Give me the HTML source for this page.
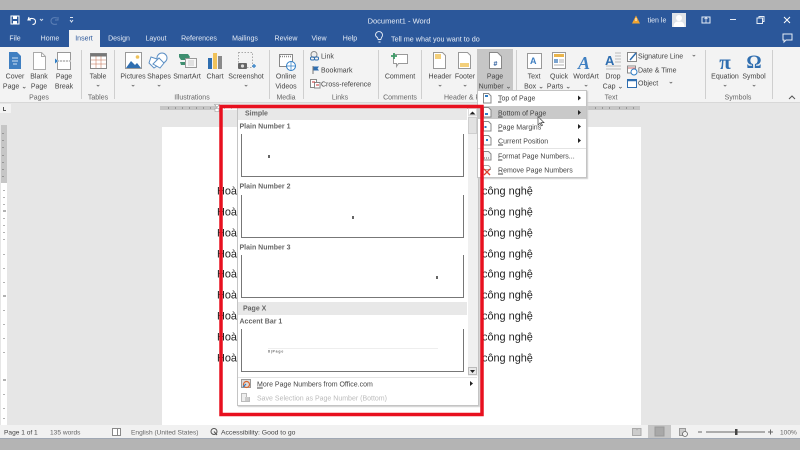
<!DOCTYPE html>
<html lang="vi">
<head>
<meta charset="utf-8">
<title>Document1 - Word</title>
<style>
html,body{margin:0;padding:0;width:800px;height:450px;overflow:hidden;background:#b4b4b4}
body{position:relative;font-family:"Liberation Sans","Noto Sans CJK SC",sans-serif;font-size:7px;color:#444;filter:blur(.3px)}
.r{position:absolute}
.t{position:absolute;white-space:nowrap;line-height:10px;transform:translateY(-3.5px)}
.c{position:absolute;white-space:nowrap;line-height:10px;transform:translate(-50%,-3.5px)}
.w{color:#e6ecf5}
.sep{position:absolute;top:50px;width:1px;height:49px;background:#cfcfcf}
.g{color:#666}
.doc{font-size:10.9px;color:#222}
.b{font-weight:bold;color:#666}
svg{position:absolute;left:0;top:0}
</style>
</head>
<body>
<div class="r" style="left:0;top:10px;width:800px;height:37px;background:#2b579a"></div>
<div class="r" style="left:0;top:47px;width:800px;height:55px;background:#f3f3f3"></div>
<div class="r" style="left:0;top:102px;width:800px;height:323px;background:#e6e6e6"></div>
<div class="r" style="left:0;top:102px;width:800px;height:1px;background:#d8d8d8"></div>
<div class="r" style="left:0;top:425px;width:800px;height:13px;background:#f1f1f1"></div>
<div class="r" style="left:0;top:438px;width:800px;height:1px;background:#a0a8b4"></div>
<div class="r" style="left:69px;top:30px;width:31px;height:17px;background:#f3f3f3"></div>

<div class="r" style="left:162px;top:127px;width:479px;height:298px;background:#fff"></div>

<!-- rulers -->
<div class="r" style="left:160px;top:106px;width:57px;height:4px;background:#c6c6c6"></div>
<div class="r" style="left:217px;top:106px;width:30px;height:4px;background:#fff"></div>
<div class="r" style="left:587px;top:106px;width:53px;height:4px;background:#c6c6c6"></div>
<div class="r" style="left:1px;top:125px;width:6px;height:58px;background:#c6c6c6"></div>
<div class="r" style="left:1px;top:183px;width:6px;height:242px;background:#fff"></div>
<div class="r" style="left:0;top:104px;width:11px;height:9px;background:#f3f3f3"></div>
<div class="r" style="left:3px;top:107px;width:1px;height:3px;background:#555"></div>
<div class="r" style="left:3px;top:110px;width:3px;height:1px;background:#555"></div>

<!-- groups -->
<div class="sep" style="left:81px"></div>
<div class="sep" style="left:114px"></div>
<div class="sep" style="left:269px"></div>
<div class="sep" style="left:303px"></div>
<div class="sep" style="left:378px"></div>
<div class="sep" style="left:421px"></div>
<div class="sep" style="left:516px"></div>
<div class="sep" style="left:705px"></div>
<div class="sep" style="left:772px"></div>
<div class="r" style="left:477px;top:49px;width:36px;height:42px;background:#c6c6c6"></div>

<!-- document text -->
<span class="t doc" style="left:217px;top:189.500px">Hoà</span><span class="t doc" style="left:482px;top:189.500px">công nghệ</span>
<span class="t doc" style="left:217px;top:210.500px">Hoà</span><span class="t doc" style="left:482px;top:210.500px">công nghệ</span>
<span class="t doc" style="left:217px;top:231.500px">Hoà</span><span class="t doc" style="left:482px;top:231.500px">công nghệ</span>
<span class="t doc" style="left:217px;top:252.500px">Hoà</span><span class="t doc" style="left:482px;top:252.500px">công nghệ</span>
<span class="t doc" style="left:217px;top:273px">Hoà</span><span class="t doc" style="left:482px;top:273px">công nghệ</span>
<span class="t doc" style="left:217px;top:294px">Hoà</span><span class="t doc" style="left:482px;top:294px">công nghệ</span>
<span class="t doc" style="left:217px;top:315px">Hoà</span><span class="t doc" style="left:482px;top:315px">công nghệ</span>
<span class="t doc" style="left:217px;top:336px">Hoà</span><span class="t doc" style="left:482px;top:336px">công nghệ</span>
<span class="t doc" style="left:217px;top:357px">Hoà</span><span class="t doc" style="left:482px;top:357px">công nghệ</span>

<!-- title bar text -->
<span class="c w" style="left:399px;top:20px;font-size:7.500px">Document1 - Word</span>
<span class="c w" style="left:657px;top:20px">tien le</span>
<span class="c w" style="left:15px;top:38px">File</span>
<span class="c w" style="left:50px;top:38px">Home</span>
<span class="c" style="left:84px;top:38px;color:#2b579a">Insert</span>
<span class="c w" style="left:119px;top:38px">Design</span>
<span class="c w" style="left:156px;top:38px">Layout</span>
<span class="c w" style="left:199px;top:38px">References</span>
<span class="c w" style="left:245px;top:38px">Mailings</span>
<span class="c w" style="left:286px;top:38px">Review</span>
<span class="c w" style="left:319px;top:38px">View</span>
<span class="c w" style="left:350px;top:38px">Help</span>
<span class="t w" style="left:391px;top:38px;font-size:7.200px">Tell me what you want to do</span>

<!-- ribbon labels -->
<span class="c" style="left:15px;top:76px">Cover</span><span class="c" style="left:15px;top:85.500px">Page ⌄</span>
<span class="c" style="left:39px;top:76px">Blank</span><span class="c" style="left:39px;top:85.500px">Page</span>
<span class="c" style="left:64px;top:76px">Page</span><span class="c" style="left:64px;top:85.500px">Break</span>
<span class="c g" style="left:39px;top:97px">Pages</span>
<span class="c" style="left:98px;top:76px">Table</span><span class="c" style="left:98px;top:84px">⌄</span>
<span class="c g" style="left:98px;top:97px">Tables</span>
<span class="c" style="left:133px;top:76px">Pictures</span><span class="c" style="left:133px;top:84px">⌄</span>
<span class="c" style="left:159px;top:76px">Shapes</span><span class="c" style="left:159px;top:84px">⌄</span>
<span class="c" style="left:187px;top:76px">SmartArt</span>
<span class="c" style="left:215px;top:76px">Chart</span>
<span class="c" style="left:246px;top:76px">Screenshot</span><span class="c" style="left:246px;top:84px">⌄</span>
<span class="c g" style="left:192px;top:97px">Illustrations</span>
<span class="c" style="left:286px;top:76px">Online</span><span class="c" style="left:286px;top:85.500px">Videos</span>
<span class="c g" style="left:286px;top:97px">Media</span>
<span class="t" style="left:321px;top:56px">Link</span>
<span class="t" style="left:321px;top:70px">Bookmark</span>
<span class="t" style="left:321px;top:83.500px">Cross-reference</span>
<span class="c g" style="left:340px;top:97px">Links</span>
<span class="c" style="left:400px;top:76px">Comment</span>
<span class="c g" style="left:400px;top:97px">Comments</span>
<span class="c" style="left:440px;top:76px">Header</span><span class="c" style="left:440px;top:84px">⌄</span>
<span class="c" style="left:465px;top:76px">Footer</span><span class="c" style="left:465px;top:84px">⌄</span>
<span class="t g" style="left:444px;top:97px">Header &amp; F</span>
<span class="c" style="left:495px;top:76px">Page</span><span class="c" style="left:495px;top:85.500px">Number ⌄</span>
<span class="c" style="left:534px;top:76px">Text</span><span class="c" style="left:534px;top:85.500px">Box ⌄</span>
<span class="c" style="left:559px;top:76px">Quick</span><span class="c" style="left:559px;top:85.500px">Parts ⌄</span>
<span class="c" style="left:586px;top:76px">WordArt</span><span class="c" style="left:586px;top:84px">⌄</span>
<span class="c" style="left:613px;top:76px">Drop</span><span class="c" style="left:613px;top:85.500px">Cap ⌄</span>
<span class="t" style="left:638px;top:56px">Signature Line</span><span class="t" style="left:691px;top:54px">⌄</span>
<span class="t" style="left:638px;top:70px">Date &amp; Time</span>
<span class="t" style="left:638px;top:83px">Object</span><span class="t" style="left:668px;top:81px">⌄</span>
<span class="c g" style="left:611px;top:97px">Text</span>
<span class="c" style="left:725px;top:76px">Equation</span><span class="c" style="left:725px;top:84px">⌄</span>
<span class="c" style="left:754px;top:76px">Symbol</span><span class="c" style="left:754px;top:84px">⌄</span>
<span class="c g" style="left:738px;top:97px">Symbols</span>

<!-- status bar -->
<span class="t" style="left:4px;top:432px;font-size:6.600px">Page 1 of 1</span>
<span class="t g" style="left:50px;top:432px;font-size:6.600px">135 words</span>
<span class="t g" style="left:131px;top:432px;font-size:6.600px">English (United States)</span>
<span class="t" style="left:221px;top:432px;font-size:6.800px">Accessibility: Good to go</span>
<span class="t g" style="left:780px;top:432px;font-size:6.600px">100%</span>
<div class="r" style="left:648px;top:425px;width:23px;height:13px;background:#c6c6c6"></div>

<!-- icons -->
<svg width="800" height="450" viewBox="0 0 800 450" fill="none">
  <!-- QAT -->
  <rect x="11" y="16" width="8" height="8" fill="none" stroke="#fff" stroke-width="1"/>
  <rect x="13" y="16" width="4" height="3" fill="#fff"/>
  <rect x="13" y="21" width="4" height="3" fill="#fff"/>
  <path d="M29 17l-1 3h3M28.500 19.500c3-2 7-1 7 2s-2 3-3 3" stroke="#fff" stroke-width="1.100"/>
  <path d="M40 19l1.500 1.500L43 19" stroke="#cdd9ea"/>
  <path d="M58 17v3h-3M57 18c-3-1-6 0-6 3s3 4 6 3" stroke="#5d80b6"/>
  <path d="M70 17.500h3M70 20l1.500 2L73 20" stroke="#dfe7f2"/>
  <!-- title right -->
  <path d="M636 15.500l4 8h-8z" fill="#f2a530"/><rect x="635.500" y="18" width="1" height="3" fill="#fff"/>
  <rect x="672" y="13" width="14" height="14" fill="#dfe3e8"/>
  <circle cx="679" cy="18" r="3" fill="#fff"/><path d="M673.500 27c0-4 2-5.500 5.500-5.500s5.500 1.500 5.500 5.500z" fill="#fff"/>
  <rect x="702" y="17" width="8" height="6" stroke="#e6ecf5"/><path d="M706 17v6M704.500 19l1.500-1.500 1.500 1.500" stroke="#e6ecf5" stroke-width=".8"/>
  <path d="M730 19.500h6" stroke="#e6ecf5"/>
  <rect x="757" y="18" width="5.500" height="5.500" stroke="#e6ecf5"/><path d="M759 18v-1.500h5v5h-1.500" stroke="#e6ecf5"/>
  <path d="M784 17l6 6M790 17l-6 6" stroke="#fff" stroke-width="1"/>
  <path d="M783 34h9v6h-6l-2 2v-2h-1z" stroke="#e6ecf5"/>
  <path d="M375.500 35a3.500 3.500 0 1 1 6 2.500l-.7 2h-2.600l-.7-2a3.500 3.500 0 0 1-2-2.500zM378.500 42h2" stroke="#e6ecf5" stroke-width=".9"/>

  <!-- Cover Page -->
  <path d="M9 52h8l4 4v13H9z" fill="#3f7fc1"/><path d="M12 58h6M12 61h6M13 64h4" stroke="#cfe0f2"/>
  <!-- Blank Page -->
  <path d="M33.500 52.500h8l4 4v13h-12z" fill="#fff" stroke="#aaa"/><path d="M41.500 52.500v4h4" stroke="#aaa"/>
  <!-- Page Break -->
  <path d="M57.500 60v-7.500h13V60M57.500 62v7.500h13V62" fill="#fff" stroke="#999"/>
  <path d="M57 61h14" stroke="#999" stroke-dasharray="2 1"/><path d="M55 58.500l3 2.500-3 2.500z" fill="#2f7ec6"/>
  <!-- Table -->
  <rect x="90.500" y="53.500" width="16" height="15" fill="#fff" stroke="#888"/>
  <rect x="90.500" y="53.500" width="16" height="3" fill="#777"/>
  <path d="M96 56v12M101 56v12M91 60h15M91 64h15" stroke="#c06a4a" stroke-width=".5"/>
  <!-- Pictures -->
  <rect x="125.500" y="52.500" width="16" height="16" fill="#fff" stroke="#999"/>
  <path d="M126 68l5-7 4 4 2-2 4 5z" fill="#2f6eb0"/><circle cx="137.500" cy="57" r="1.800" fill="#f0c25a"/>
  <!-- Shapes -->
  <path d="M151 57l6 2v7l-3 2-5-5z" fill="#fff" stroke="#5c8fc4"/>
  <circle cx="162" cy="58" r="5" fill="#fff" stroke="#5c8fc4"/>
  <path d="M153 64l6-6 5 5-4 5z" fill="#fff" stroke="#5c8fc4"/>
  <!-- SmartArt -->
  <path d="M179 54h9l2 3-2 3h-7l-2-3z" fill="#3f8f70"/><path d="M180 62h8l-2 3h-5z" fill="#3f8f70"/>
  <rect x="185.500" y="58.500" width="11" height="9" fill="#f7f7f7" stroke="#999"/><path d="M188 61h6M188 63h6M188 65h6" stroke="#999" stroke-width=".6"/>
  <!-- Chart -->
  <rect x="208" y="58" width="4" height="11" fill="#2f6eb0"/><rect x="213" y="53" width="4" height="16" fill="#f0c25a"/><rect x="218" y="56" width="4" height="13" fill="#8a8a8a"/>
  <!-- Screenshot -->
  <rect x="238.500" y="52.500" width="14" height="15" stroke="#aaa" stroke-dasharray="1.500 1.500"/>
  <rect x="238" y="63" width="9" height="6" rx="1" fill="#666"/><circle cx="242.500" cy="66" r="1.600" fill="#ddd"/>
  <path d="M252 66h4M254 64v4" stroke="#2f7ec6" stroke-width="1.200"/>
  <!-- Online Videos -->
  <rect x="279.500" y="54.500" width="13" height="12" fill="#fff" stroke="#888"/>
  <path d="M280 56.500h12" stroke="#888" stroke-dasharray="1 1" stroke-width="1.500"/>
  <circle cx="291" cy="66" r="4.500" fill="#fff" stroke="#2f7ec6"/><path d="M286.500 66h9M291 61.500v9" stroke="#2f7ec6" stroke-width=".7"/>
  <!-- Link icons -->
  <circle cx="314" cy="54.500" r="3" fill="#eee" stroke="#888"/>
  <rect x="310.500" y="57" width="4" height="3" rx="1.200" stroke="#2f6eb0"/><rect x="314.500" y="57" width="4" height="3" rx="1.200" stroke="#2f6eb0"/>
  <path d="M313 66v8" stroke="#777"/><path d="M313.500 66.500h5.500l-1.500 2 1.500 2h-5.500z" fill="#2f6eb0"/>
  <rect x="310.500" y="79.500" width="6" height="8" fill="#fff" stroke="#888"/><rect x="314.500" y="82.500" width="5.500" height="5.500" fill="#fff" stroke="#888"/><path d="M312 82h3M316 85h3" stroke="#c33"/>
  <!-- Comment -->
  <path d="M393.500 54.500h14v9h-9l-2 3v-3h-3z" fill="#fff" stroke="#999"/>
  <path d="M391 56h6M394 53v6" stroke="#3f9a68" stroke-width="1.800"/>
  <!-- Header -->
  <path d="M433.500 52.500h9l3 3v13h-12z" fill="#fff" stroke="#999"/><rect x="435" y="54" width="6" height="5" fill="#f3cf7a"/>
  <!-- Footer -->
  <path d="M458.500 52.500h9l3 3v13h-12z" fill="#fff" stroke="#999"/><rect x="460" y="63" width="9" height="4" fill="#f3cf7a"/>
  <!-- Page Number -->
  <path d="M489.500 52.500h8l4 4v12h-12z" fill="#fff" stroke="#888"/>
  <text x="495.500" y="66" text-anchor="middle" font-size="7" font-weight="bold" fill="#2f5f9e" font-family="Liberation Sans">#</text>
  <!-- Text Box -->
  <rect x="527.500" y="53.500" width="14" height="15" fill="#fff" stroke="#999"/>
  <text x="530" y="64" font-size="9" font-weight="bold" fill="#3f7fc1" font-family="Liberation Sans">A</text>
  <!-- Quick Parts -->
  <rect x="552.500" y="52.500" width="13" height="16" fill="#fff" stroke="#999"/><rect x="554" y="54" width="10" height="3" fill="#e9b44c"/><rect x="554" y="59" width="4" height="4" fill="#7aa4d0"/><path d="M559 60h5M559 62h5M554 65h10" stroke="#999" stroke-width=".8"/>
  <!-- WordArt -->
  <text x="578" y="69" font-size="18" font-style="italic" font-weight="bold" fill="#3f7fc1" font-family="Liberation Serif">A</text>
  <!-- Drop cap -->
  <text x="605" y="65" font-size="13" font-weight="bold" fill="#2f6eb0" font-family="Liberation Sans">A</text>
  <path d="M615 53h6M615 56h6M615 59h6M615 62h6M606 66h15M606 69h15" stroke="#bbb"/>
  <!-- Signature/Date/Object -->
  <rect x="627.500" y="52.500" width="9" height="9" fill="#fff" stroke="#888"/><path d="M630 60l6-7" stroke="#2f6eb0" stroke-width="1.500"/>
  <rect x="627.500" y="66" width="8" height="7" fill="#fff" stroke="#888"/><path d="M628 68h7" stroke="#c66"/><circle cx="634" cy="72" r="3" fill="#fff" stroke="#2f7ec6"/>
  <rect x="627.500" y="79.500" width="9" height="8" fill="#fff" stroke="#2f6eb0"/><path d="M628 80.500h8" stroke="#2f6eb0" stroke-width="1.500"/>
  <!-- Equation / Symbol -->
  <text x="725" y="69" text-anchor="middle" font-size="21" font-weight="bold" fill="#2f6eb0" font-family="Liberation Serif">π</text>
  <text x="754" y="68" text-anchor="middle" font-size="19" font-weight="bold" fill="#2f6eb0" font-family="Liberation Serif">Ω</text>
  <path d="M789 99l3-3 3 3" stroke="#555"/>

  <!-- ruler ticks -->
  <path d="M168 108h1M175 108h1M182 108h1M189 108h1M196 108h1M203 108h1M210 108h1M224 108h1M231 108h1M595 108h1M602 108h1M609 108h1M619 108h1M626 108h1M633 108h1" stroke="#666"/>
  <path d="M3 133v1M3 140v1M3 147v1M3 155v1M3 162v1M3 169v1M3 176v1M4 190v1M4 197v1M4 204v1M3 211h3M4 218v1M4 225v1M4 232v1M4 239v1M4 254v1M4 268v1M4 282v1M3 296h3M4 310v1M4 324v1M4 338v1M4 352v1M3 380h3M4 394v1M4 408v1M4 418v1" stroke="#666"/>
  <path d="M214.500 104.500h5l-2.500 3zM215 108.500h4v3h-4z" fill="#fff" stroke="#999" stroke-width=".6"/>

  <!-- status icons -->
  <path d="M112.500 428.500h5v7h-5zM117.500 428.500h3v7h-3z" fill="#fff" stroke="#888"/>
  <circle cx="214" cy="431.500" r="3" stroke="#555"/><path d="M214 431.500l3 3.500" stroke="#555"/>
  <path d="M632.500 428.500h4l.5 1 .5-1h3.500v7h-8.500z" fill="#ccc" stroke="#aaa"/>
  <rect x="655" y="427" width="9" height="9" fill="#a8a8a8" stroke="#999"/>
  <rect x="679.500" y="428.500" width="6" height="7" fill="#ccc" stroke="#999"/><circle cx="685" cy="434" r="2.500" fill="#f1f1f1" stroke="#666" stroke-width=".8"/>
  <path d="M698 432h4M706 432h59M768 432h5M770.500 429.500v5" stroke="#666"/>
  <rect x="735" y="429" width="2.500" height="6" fill="#444"/>
</svg>

<!-- dropdown gallery -->
<div class="r" style="left:237px;top:108px;width:240px;height:296px;background:#fff;border:1px solid #c4c4c4;box-shadow:1px 1px 1px #ccc"></div>
<div class="r" style="left:238px;top:108px;width:229px;height:12px;background:#e8e8e8"></div>
<span class="t b" style="left:245px;top:113px">Simple</span>
<span class="t b" style="left:239.500px;top:126px">Plain Number 1</span>
<div class="r" style="left:241px;top:134px;width:221px;height:42px;border:solid #777;border-width:0 1px 1.500px 1.500px"></div>
<div class="r" style="left:268px;top:155px;width:1.500px;height:3px;background:#666"></div>
<span class="t b" style="left:239.500px;top:186px">Plain Number 2</span>
<div class="r" style="left:241px;top:195px;width:221px;height:42px;border:solid #777;border-width:0 1px 1.500px 1.500px"></div>
<div class="r" style="left:352px;top:216px;width:1.500px;height:3px;background:#666"></div>
<span class="t b" style="left:239.500px;top:247px">Plain Number 3</span>
<div class="r" style="left:241px;top:255px;width:221px;height:42px;border:solid #777;border-width:0 1px 1.500px 1.500px"></div>
<div class="r" style="left:436px;top:276px;width:1.500px;height:3px;background:#666"></div>
<div class="r" style="left:238px;top:302px;width:229px;height:13px;background:#e8e8e8"></div>
<span class="t b" style="left:243px;top:308px">Page X</span>
<span class="t b" style="left:239.500px;top:321px">Accent Bar 1</span>
<div class="r" style="left:241px;top:329px;width:221px;height:42px;border:solid #777;border-width:0 1px 1.500px 1.500px"></div>
<div class="r" style="left:268px;top:348px;width:170px;height:1px;background:#eee"></div>
<span class="t" style="left:268px;top:350px;font-size:3.500px;letter-spacing:.8px;font-weight:bold;color:#666">8|Page</span>
<!-- scrollbar -->
<div class="r" style="left:468px;top:108px;width:10px;height:268px;background:#f0f0f0"></div>
<div class="r" style="left:468px;top:108px;width:9px;height:8px;background:#fff;border:1px solid #ddd;box-sizing:border-box"></div>
<div class="r" style="left:468px;top:117px;width:9px;height:17px;background:#e2e2e2;border:1px solid #cfcfcf;box-sizing:border-box"></div>
<div class="r" style="left:468px;top:367px;width:9px;height:8px;background:#e8e8e8;border:1px solid #bbb;box-sizing:border-box"></div>
<div class="r" style="left:238px;top:377px;width:239px;height:1px;background:#e4e4e4"></div>
<span class="t" style="left:257px;top:383.500px"><u>M</u>ore Page Numbers from Office.com</span>
<span class="t" style="left:257px;top:397.500px;color:#bbb">Save Selection as Page Number (Bottom)</span>

<!-- menu -->
<div class="r" style="left:477px;top:90px;width:110px;height:88px;background:#fff;border:1px solid #c4c4c4;box-sizing:border-box;box-shadow:1px 1px 1px #ccc"></div>
<div class="r" style="left:478px;top:106px;width:108px;height:13px;background:#c9c9c9"></div>
<span class="t" style="left:498px;top:98px"><u>T</u>op of Page</span>
<span class="t" style="left:498px;top:112.500px"><u>B</u>ottom of Page</span>
<span class="t" style="left:498px;top:126.500px"><u>P</u>age Margins</span>
<span class="t" style="left:498px;top:140.500px"><u>C</u>urrent Position</span>
<div class="r" style="left:478px;top:148px;width:108px;height:1px;background:#e4e4e4"></div>
<span class="t" style="left:498px;top:156px"><u>F</u>ormat Page Numbers...</span>
<span class="t" style="left:498px;top:170px"><u>R</u>emove Page Numbers</span>

<!-- overlay icons -->
<svg width="800" height="450" viewBox="0 0 800 450" fill="none">
  <path d="M469.500 114.500l3-3 3 3z" fill="#222"/>
  <path d="M470 370l2.500 3 2.500-3z" fill="#222"/>
  <path d="M470 381v5l3-2.500z" fill="#222"/>
  <path d="M578 95.500v5l3-2.500zM578 110v5l3-2.500zM578 124v5l3-2.500zM578 138v5l3-2.500z" fill="#222"/>
  <path d="M483.500 93.500h5l2.500 2.500v7h-7.500z" fill="#fff" stroke="#888"/><rect x="485" y="95" width="3" height="2" fill="#2f7ec6"/>
  <path d="M483.500 107.500h5l2.500 2.500v7h-7.500z" fill="#fff" stroke="#888"/><rect x="485" y="113" width="3" height="2" fill="#2f7ec6"/>
  <path d="M483.500 121.500h5l2.500 2.500v7h-7.500z" fill="#fff" stroke="#888"/><rect x="484.500" y="126" width="2" height="2" fill="#2f7ec6"/>
  <path d="M483.500 135.500h5l2.500 2.500v7h-7.500z" fill="#fff" stroke="#888"/><rect x="486" y="139" width="2" height="2" fill="#2f7ec6"/>
  <path d="M483.500 151.500h5l2.500 2.500v6h-7.500z" fill="#f4f4f4" stroke="#888"/><path d="M482 158h8" stroke="#666" stroke-dasharray="1 1"/>
  <path d="M483.500 165.500h5l2 2v2h-7z" fill="#fff" stroke="#aaa"/>
  <path d="M484 169l6 6M490 169l-6 6" stroke="#d9442f" stroke-width="1.300"/>
  <path d="M538 116.500v8.500l2-2 1.300 2.800 1.200-.5-1.300-2.700h2.800z" fill="#fff" stroke="#444" stroke-width=".7"/>
  <rect x="241.500" y="379.500" width="9" height="8" fill="#ddd" stroke="#999"/><circle cx="246.500" cy="384.500" r="3" stroke="#d9662f" stroke-width="1.200"/><path d="M243 387l3-3" stroke="#2f7ec6" stroke-width="1.200"/>
  <path d="M241.500 393.500h5v4h3v4h-8z" fill="#eee" stroke="#bbb"/><rect x="245" y="397" width="4" height="4" fill="#ccc"/>
  <!-- red frame -->
  <rect x="221" y="106.500" width="261" height="308" stroke="#e8101f" stroke-width="3.500"/>
</svg>
</body>
</html>
